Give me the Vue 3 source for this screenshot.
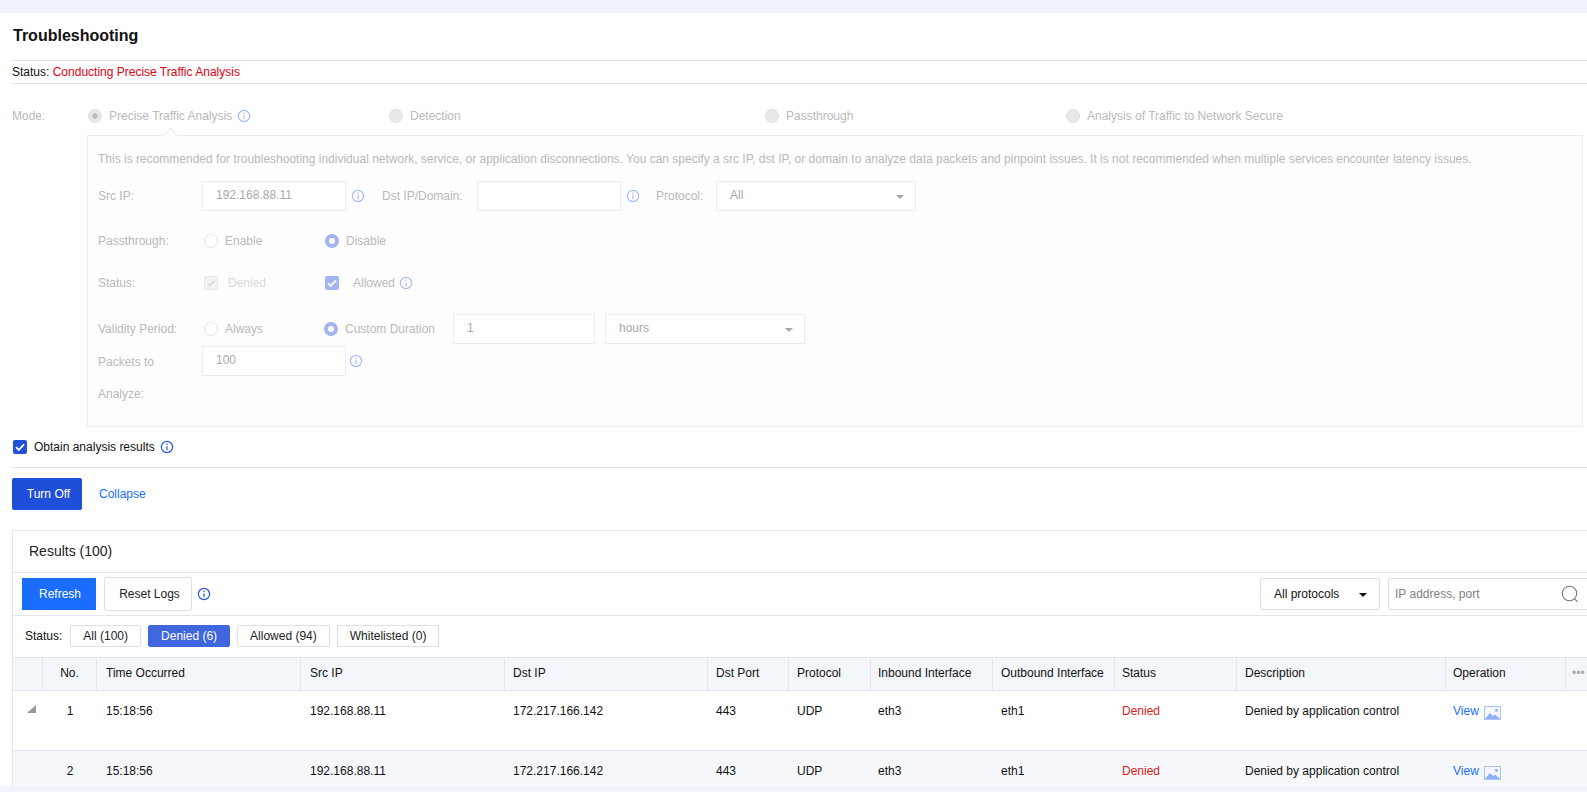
<template>
  <div class="page">
    <div class="panel">
      <h2 class="title">Troubleshooting</h2>
      <div class="status-line">Status: <span class="red">Conducting Precise Traffic Analysis</span></div>

      <div class="mode-row">
        <span class="mode-label">Mode:</span>
        <label class="mode-opt"><i class="radio gray on"></i>Precise Traffic Analysis
          <svg class="info pale" viewBox="0 0 14 14"><circle cx="7" cy="7" r="5.6" /><path d="M7 6.2v4M7 3.6v1.4" /></svg>
        </label>
        <label class="mode-opt m2"><i class="radio gray"></i>Detection</label>
        <label class="mode-opt"><i class="radio gray"></i>Passthrough</label>
        <label class="mode-opt"><i class="radio gray"></i>Analysis of Traffic to Network Secure</label>
      </div>

      <div class="box">
        <i class="arrow"></i>
        <p class="desc">This is recommended for troubleshooting individual network, service, or application disconnections. You can specify a src IP, dst IP, or domain to analyze data packets and pinpoint issues. It is not recommended when multiple services encounter latency issues.</p>

        <div class="row r-src">
          <span class="lbl">Src IP:</span>
          <div class="input">192.168.88.11</div>
          <svg class="info pale" viewBox="0 0 14 14"><circle cx="7" cy="7" r="5.6" /><path d="M7 6.2v4M7 3.6v1.4" /></svg>
          <span class="lbl-dst">Dst IP/Domain:</span>
          <div class="input"></div>
          <svg class="info pale" viewBox="0 0 14 14"><circle cx="7" cy="7" r="5.6" /><path d="M7 6.2v4M7 3.6v1.4" /></svg>
          <span class="lbl-proto">Protocol:</span>
          <div class="input select">All<i class="caret"></i></div>
        </div>

        <div class="row r-pass">
          <span class="lbl opts">Passthrough:</span>
          <label class="opt"><i class="radio"></i>Enable</label>
          <label class="opt"><i class="radio blue"></i>Disable</label>
        </div>

        <div class="row r-status">
          <span class="lbl opts">Status:</span>
          <label class="opt faint"><i class="check off"><svg viewBox="0 0 14 14"><path d="M3 7.2l2.8 2.8L11 4.4" /></svg></i>Denied</label>
          <label class="opt"><i class="check on"><svg viewBox="0 0 14 14"><path d="M3 7.2l2.8 2.8L11 4.4" /></svg></i>Allowed
            <svg class="info pale" viewBox="0 0 14 14"><circle cx="7" cy="7" r="5.6" /><path d="M7 6.2v4M7 3.6v1.4" /></svg>
          </label>
        </div>

        <div class="row r-valid">
          <span class="lbl opts">Validity Period:</span>
          <label class="opt"><i class="radio"></i>Always</label>
          <label class="opt custom"><i class="radio blue"></i>Custom Duration</label>
          <div class="input short">1</div>
          <div class="input select">hours<i class="caret"></i></div>
        </div>

        <div class="row r-packets">
          <span class="lbl wrap">Packets to Analyze:</span>
          <div class="input">100</div>
          <svg class="info pale" viewBox="0 0 14 14"><circle cx="7" cy="7" r="5.6" /><path d="M7 6.2v4M7 3.6v1.4" /></svg>
        </div>
      </div>

      <div class="obtain">
        <i class="check solid"><svg viewBox="0 0 14 14"><path d="M3 7.2l2.8 2.8L11 4.4" /></svg></i>
        Obtain analysis results
        <svg class="info" viewBox="0 0 14 14"><circle cx="7" cy="7" r="5.6" /><path d="M7 6.2v4M7 3.6v1.4" /></svg>
      </div>

      <div class="actions">
        <button class="btn-off">Turn Off</button>
        <a class="link">Collapse</a>
      </div>

      <div class="results">
        <div class="res-head">Results (100)</div>
        <div class="toolbar">
          <button class="btn-refresh">Refresh</button>
          <button class="btn-reset">Reset Logs</button>
          <svg class="info" viewBox="0 0 14 14"><circle cx="7" cy="7" r="5.6" /><path d="M7 6.2v4M7 3.6v1.4" /></svg>
          <div class="spacer"></div>
          <div class="proto">All protocols<i class="caret dark"></i></div>
          <div class="search">
            IP address, port
            <svg viewBox="0 0 18 18"><circle cx="8.5" cy="8.5" r="7.2" /><path d="M13.6 13.8l3 3" /></svg>
          </div>
        </div>
        <div class="chips">
          <span class="chips-label">Status:</span>
          <span v-for="c in chips" :key="c.text" class="chip" :class="{ active: c.active }">{{ c.text }}</span>
        </div>

        <div class="tr th">
          <div v-for="(h, i) in headers" :key="i" class="cell" :class="'c' + i">{{ h }}</div>
          <div class="cell c12 more">•••</div>
        </div>
        <div v-for="r in rows" :key="r.no" class="tr td" :class="{ alt: r.no === 2 }">
          <div class="cell c0"><i v-if="r.no === 1" class="tri"></i></div>
          <div class="cell c1">{{ r.no }}</div>
          <div class="cell c2">{{ r.time }}</div>
          <div class="cell c3">{{ r.src }}</div>
          <div class="cell c4">{{ r.dst }}</div>
          <div class="cell c5">{{ r.port }}</div>
          <div class="cell c6">{{ r.proto }}</div>
          <div class="cell c7">{{ r.inIf }}</div>
          <div class="cell c8">{{ r.outIf }}</div>
          <div class="cell c9 denied">{{ r.status }}</div>
          <div class="cell c10">{{ r.desc }}</div>
          <div class="cell c11">
            <a class="view">View</a>
            <svg class="pic" viewBox="0 0 17 14"><rect width="17" height="14" fill="#a9c3f7" /><rect x="1" y="1" width="15" height="12" fill="#f4f7fe" /><path d="M1 13l5-6 3 3 2-1.6 5 4.6z" fill="#8fb0f5" /><circle cx="12.5" cy="4.2" r="1.5" fill="#8fb0f5" /></svg>
          </div>
          <div class="cell c12"></div>
        </div>
      </div>
    </div>
  </div>
</template>

<script setup>
const chips = [
  { text: 'All (100)' },
  { text: 'Denied (6)', active: true },
  { text: 'Allowed (94)' },
  { text: 'Whitelisted (0)' },
];

const headers = ['', 'No.', 'Time Occurred', 'Src IP', 'Dst IP', 'Dst Port', 'Protocol', 'Inbound Interface', 'Outbound Interface', 'Status', 'Description', 'Operation'];

const row = {
  time: '15:18:56',
  src: '192.168.88.11',
  dst: '172.217.166.142',
  port: '443',
  proto: 'UDP',
  inIf: 'eth3',
  outIf: 'eth1',
  status: 'Denied',
  desc: 'Denied by application control',
};

const rows = [{ no: 1, ...row }, { no: 2, ...row }];
</script>

<style scoped>
.page {
  width: 1587px;
  height: 792px;
  box-sizing: border-box;
  padding: 13px 0 6px;
  background: #f0f3fb;
  overflow: hidden;
  font-family: "Liberation Sans", Arial, sans-serif;
  font-size: 12px;
  color: #111;
}

.panel {
  height: 100%;
  background: #fff;
  padding: 0 0 0 12px;
  overflow: hidden;
}

.title {
  margin: 0;
  padding-left: 1px;
  height: 47px;
  line-height: 46px;
  font-size: 16px;
  font-weight: bold;
}

.status-line {
  height: 22px;
  line-height: 23px;
  border-top: 1px solid #e3e3ee;
  border-bottom: 1px solid #e3e3ee;
}

.red {
  color: #e60012;
}

.mode-row {
  display: flex;
  align-items: center;
  height: 51px;
  padding-top: 13px;
  box-sizing: border-box;
  color: #b9b9b9;
}

.mode-label {
  width: 76px;
}

.mode-opt {
  display: flex;
  align-items: center;
  width: 301px;
}

.mode-opt.m2 {
  width: 376px;
}

.radio {
  display: inline-block;
  width: 14px;
  height: 14px;
  margin-right: 7px;
  box-sizing: border-box;
  border: 1px solid #e4e4e4;
  border-radius: 50%;
  background: #fff;
  flex: none;
}

.radio.gray {
  background: #e8e8e8;
  border-color: #dedede;
}

.radio.gray.on {
  background: radial-gradient(circle, #bdbdbd 0 2.5px, #e8e8e8 3px);
}

.radio.blue {
  border: 4px solid #a3b5f0;
}

.info {
  width: 14px;
  height: 14px;
  flex: none;
  fill: none;
  stroke: #2a56d6;
  stroke-width: 1.2;
}

.info.pale {
  stroke: #a9bcf2;
}

.mode-opt .info {
  margin-left: 5px;
}

.box {
  position: relative;
  margin-left: 75px;
  margin-right: 4px;
  height: 292px;
  box-sizing: border-box;
  border: 1px solid #ececec;
  background: #fdfdfd;
  padding: 0 0 0 10px;
  color: #b9b9b9;
}

.arrow {
  position: absolute;
  left: 77px;
  top: -6px;
  width: 10px;
  height: 10px;
  background: #fdfdfd;
  border-left: 1px solid #ececec;
  border-top: 1px solid #ececec;
  transform: rotate(45deg);
}

.desc {
  margin: 16px 0 0;
  height: 15px;
  line-height: 15px;
  white-space: nowrap;
}

.row {
  display: flex;
  align-items: center;
}

.r-src {
  margin-top: 14px;
  height: 30px;
}

.r-pass {
  margin-top: 15px;
  height: 30px;
}

.r-status {
  margin-top: 12px;
  height: 30px;
}

.r-valid {
  margin-top: 16px;
  height: 30px;
}

.r-packets {
  margin-top: 2px;
  height: 30px;
  align-items: flex-start;
}

.lbl {
  width: 104px;
  flex: none;
}

.lbl.opts {
  width: 106px;
}

.lbl.wrap {
  width: 70px;
  margin-right: 34px;
  line-height: 32px;
}

.lbl-dst {
  width: 95px;
  margin-left: 17px;
}

.lbl-proto {
  width: 60px;
  margin-left: 16px;
}

.input {
  position: relative;
  width: 144px;
  height: 30px;
  line-height: 26px;
  box-sizing: border-box;
  border: 1px solid #ececec;
  background: #fff;
  padding-left: 13px;
  color: #a8a8a8;
  flex: none;
}

.input.short {
  width: 142px;
}

.input.select {
  width: 200px;
  margin-left: 0;
}

.r-src .info {
  margin-left: 5px;
}

.r-valid .input.select {
  margin-left: 10px;
}

.r-packets .info {
  margin: 8px 0 0 3px;
}

.caret {
  position: absolute;
  right: 11px;
  top: 13px;
  border: 4px solid transparent;
  border-top-color: #a8a8a8;
  border-bottom: 0;
}

.caret.dark {
  border-top-color: #111;
  right: 12px;
  top: 14px;
}

.opt {
  display: flex;
  align-items: center;
  width: 121px;
  flex: none;
}

.opt.custom {
  width: 129px;
  margin-left: -1px;
}

.opt .info {
  margin-left: 4px;
}

.check {
  display: inline-flex;
  width: 14px;
  height: 14px;
  margin-right: 10px;
  box-sizing: border-box;
  border-radius: 2px;
  flex: none;
}

.check svg {
  width: 100%;
  height: 100%;
  fill: none;
  stroke: #fff;
  stroke-width: 1.8;
}

.check.on {
  background: #a3b5f0;
  margin-right: 14px;
}

.check.off {
  background: #f3f3f3;
  border: 1px solid #e8e8e8;
}

.check.off svg {
  stroke: #d8d8d8;
}

.faint {
  color: #d9d9d9;
}

.check.solid {
  background: #2050d8;
  margin-right: 7px;
  margin-left: 1px;
}

.obtain {
  display: flex;
  align-items: center;
  height: 24px;
  padding: 8px 0;
  border-bottom: 1px solid #e3e3ee;
}

.obtain .info {
  margin-left: 5px;
}

.actions {
  display: flex;
  align-items: center;
  height: 32px;
  margin-top: 10px;
}

.btn-off {
  width: 70px;
  height: 32px;
  border: 0;
  border-radius: 2px;
  background: #1f4fd8;
  color: #fff;
  font: inherit;
  padding: 0 0 0 3px;
}

.link {
  margin-left: 17px;
  color: #1a6dff;
}

.results {
  margin-top: 20px;
  width: 1600px;
  border: 1px solid #e3e6f0;
  border-bottom: 0;
}

.res-head {
  height: 41px;
  line-height: 41px;
  padding-left: 16px;
  font-size: 14px;
  color: #222;
  border-bottom: 1px solid #e3e6f0;
}

.toolbar {
  display: flex;
  align-items: center;
  height: 42px;
  padding: 0 0 0 9px;
  width: 1576px;
  border-bottom: 1px solid #e3e6f0;
}

.btn-refresh {
  width: 74px;
  height: 32px;
  border: 0;
  background: #1a6dff;
  color: #fff;
  font: inherit;
  padding: 0 0 0 2px;
}

.btn-reset {
  width: 88px;
  height: 34px;
  margin-left: 8px;
  border: 1px solid #e0e0e0;
  background: #fff;
  color: #222;
  font: inherit;
  padding: 0 0 0 3px;
  border-radius: 2px;
}

.toolbar .info {
  margin-left: 5px;
}

.spacer {
  flex: 1;
}

.proto {
  position: relative;
  width: 120px;
  height: 32px;
  line-height: 30px;
  box-sizing: border-box;
  border: 1px solid #e0e0e0;
  padding-left: 13px;
  border-radius: 2px;
}

.search {
  position: relative;
  display: flex;
  align-items: center;
  justify-content: space-between;
  width: 210px;
  height: 32px;
  margin-left: 8px;
  box-sizing: border-box;
  border: 1px solid #e0e0e0;
  padding: 0 18px 0 6px;
  color: #808080;
  border-radius: 2px;
}

.search svg {
  width: 18px;
  height: 18px;
  fill: none;
  stroke: #777;
  stroke-width: 1.1;
}

.chips {
  display: flex;
  align-items: center;
  height: 41px;
  box-sizing: border-box;
  padding: 0 0 2px 12px;
}

.chips-label {
  margin-right: 8px;
}

.chip {
  height: 22px;
  line-height: 20px;
  box-sizing: border-box;
  border: 1px solid #e0e0e0;
  padding: 0 12px;
  margin-right: 7px;
  border-radius: 2px;
  color: #222;
}

.chip.active {
  background: #3f66dc;
  border-color: #3f66dc;
  color: #fff;
}

.tr {
  display: flex;
}

.th {
  height: 34px;
  box-sizing: border-box;
  background: #f3f6fa;
  border-top: 1px solid #e3e6f0;
  border-bottom: 1px solid #e3e6f0;
}

.th .cell {
  line-height: 31px;
  border-right: 1px solid #e3e6f0;
}

.td {
  height: 59px;
  border-bottom: 1px solid #e3e6f0;
}

.td .cell {
  padding-top: 13px;
  line-height: 15px;
}

.td.alt {
  background: #f5f7fb;
}

.cell {
  box-sizing: border-box;
  padding-left: 8px;
  flex: none;
  white-space: nowrap;
}

.c0 { width: 30px; padding-left: 14px; }
.c1 { width: 54px; padding-left: 0; text-align: center; }
.c2 { width: 204px; padding-left: 9px; }
.c3 { width: 204px; padding-left: 9px; }
.c4 { width: 203px; }
.c5 { width: 81px; }
.c6 { width: 82px; }
.c7 { width: 122px; padding-left: 7px; }
.c8 { width: 122px; }
.c9 { width: 122px; padding-left: 7px; }
.c10 { width: 209px; }
.c11 { width: 120px; padding-left: 7px; }
.c12 { width: 40px; }

.more {
  color: #aaa;
  font-size: 12px;
  padding-left: 6px;
  border-right: 0 !important;
}

.denied {
  color: #e02020;
}

.view {
  color: #1a6dff;
}

.pic {
  width: 17px;
  height: 14px;
  margin-left: 5px;
  vertical-align: -5px;
}

.tri {
  display: block;
  margin-top: 1px;
  width: 9px;
  height: 8px;
  background: #999;
  clip-path: polygon(100% 0, 100% 100%, 0 100%);
}
</style>

<style>
html, body {
  margin: 0;
  background: #f0f3fb;
}
</style>
